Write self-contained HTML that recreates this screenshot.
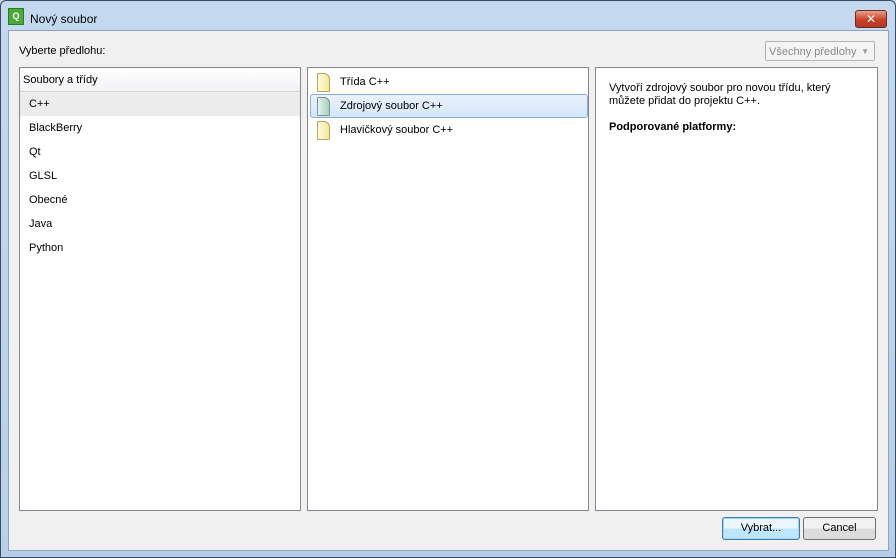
<!DOCTYPE html>
<html><head><style>
body{margin:0;width:896px;height:558px;overflow:hidden;background:#bcd3ec;font-family:"Liberation Sans","DejaVu Sans",sans-serif;font-size:11px;color:#000;position:relative}
.frame{position:absolute;left:0;top:0;width:894px;height:556px;border:1px solid #3a4c62;border-radius:6px 6px 0 0;background:linear-gradient(#c4d9f0,#b8cfe9)}
.client{position:absolute;left:8px;top:30px;width:879px;height:519px;background:#f0f0f0;border:1px solid #8ca4c0}
.abs{position:absolute}
.panel{position:absolute;top:67px;height:442px;background:#fff;border:1px solid #828790}
.row{position:absolute;left:0;right:0;height:24px;line-height:24px;padding-left:9px}
.btn{position:absolute;top:517px;height:21px;line-height:21px;text-align:center;border:1px solid #707070;border-radius:3px;background:linear-gradient(#f2f2f2 50%,#dcdcdc 50%)}
.file{position:absolute;left:9px;width:11px;height:17px;border:1px solid #b8a55a;border-radius:1px 6px 1px 1px;background:linear-gradient(90deg,#fffce0,#f4e79a)}
</style></head><body>
<div class="frame"></div>
<div class="abs" style="left:8px;top:8px;width:14px;height:15px;background:#4caa3a;border:1px solid #2d7a24;color:#fff;font-size:9px;line-height:15px;text-align:center;font-weight:bold">Q</div>
<div class="abs" style="left:30px;top:12px;font-size:12px;color:#000">Nový soubor</div>
<div class="abs" style="left:855px;top:10px;width:30px;height:16px;border:1px solid #6b2a20;border-radius:3px;background:linear-gradient(#e8a08a,#c8412a 55%,#b53a24);color:#fff;font-weight:bold;font-size:12px;line-height:16px;text-align:center">✕</div>
<div class="client"></div>
<div class="abs" style="left:19px;top:45px">Vyberte předlohu:</div>
<div class="abs" style="left:765px;top:41px;width:110px;height:20px;border:1px solid #b4b4b4;border-radius:2px;background:#f4f4f4;color:#8a8a8a;line-height:20px;padding-left:3px;box-sizing:border-box;font-size:11px;white-space:nowrap">Všechny předlohy<span style="position:absolute;right:5px;font-size:8px;color:#999">▼</span></div>

<div class="panel" style="left:19px;width:280px">
 <div class="row" style="top:0;padding-left:3px;background:linear-gradient(#fff,#f1f2f4);border-bottom:1px solid #d5d5d5;height:23px;line-height:24px">Soubory a třídy</div>
 <div class="row" style="top:24px;background:#ececec">C++</div>
 <div class="row" style="top:48px">BlackBerry</div>
 <div class="row" style="top:72px">Qt</div>
 <div class="row" style="top:96px">GLSL</div>
 <div class="row" style="top:120px">Obecné</div>
 <div class="row" style="top:144px">Java</div>
 <div class="row" style="top:168px">Python</div>
</div>

<div class="panel" style="left:307px;width:280px">
 <div class="row" style="top:2px;padding-left:32px">Třída C++</div><div class="file" style="top:5px"></div>
 <div class="abs" style="left:2px;top:26px;width:276px;height:22px;border:1px solid #84acdd;border-radius:3px;background:linear-gradient(#eaf3fd,#d5e6fa)"></div>
 <div class="row" style="top:26px;padding-left:32px">Zdrojový soubor C++</div><div class="file" style="top:29px;background:linear-gradient(90deg,#e6f2f6,#a8d0b8);border-color:#7a9a90"></div>
 <div class="row" style="top:50px;padding-left:32px">Hlavičkový soubor C++</div><div class="file" style="top:53px"></div>
</div>

<div class="panel" style="left:595px;width:281px">
 <div class="abs" style="left:13px;top:14px;font-size:11px;line-height:13px">Vytvoří zdrojový soubor pro novou třídu, který<br>můžete přidat do projektu C++.</div>
 <div class="abs" style="left:13px;top:53px;font-size:11px;font-weight:bold">Podporované platformy:</div>
</div>

<div class="btn" style="left:722px;width:76px;border-color:#3c7fb1;box-shadow:inset 0 0 0 1px #9ed7f5;background:linear-gradient(#eaf6fd 50%,#bee6fd 50%)">Vybrat...</div>
<div class="btn" style="left:803px;width:71px">Cancel</div>
</body></html>
